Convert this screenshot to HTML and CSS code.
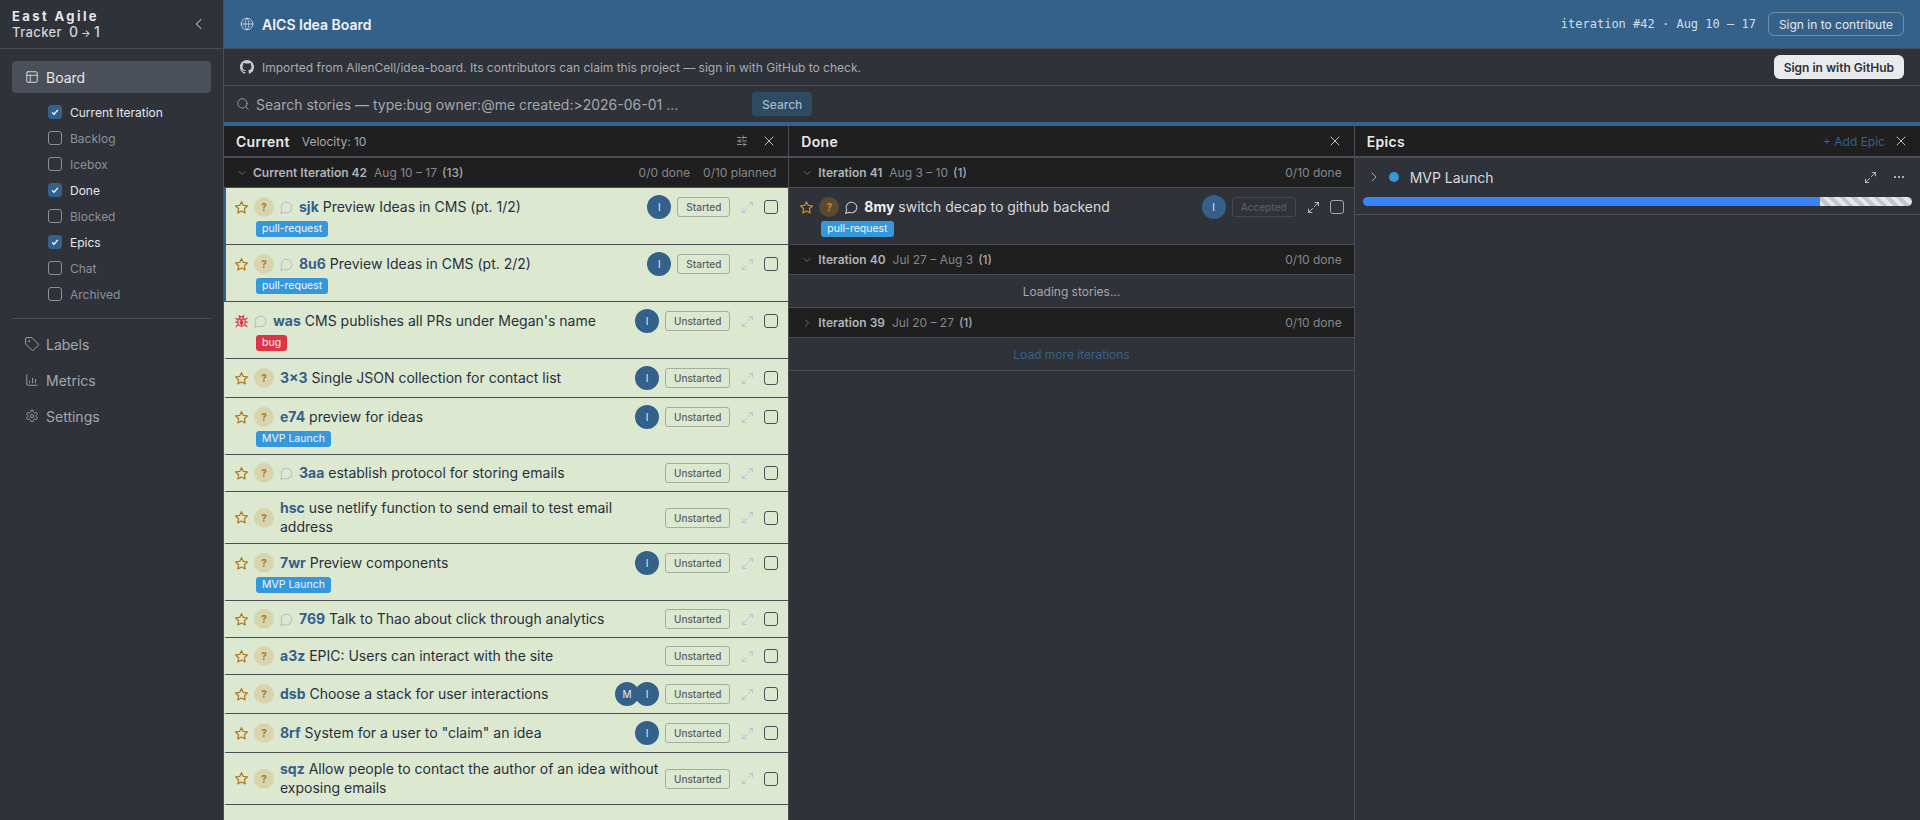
FILE: index.html
```html
<!DOCTYPE html>
<html lang="en">
<head>
    <meta charset="UTF-8">
    <title>AICS Idea Board</title>
    <link rel="stylesheet" href="styles.css">
</head>
<body>
    <svg class="sprite" xmlns="http://www.w3.org/2000/svg">
        <symbol id="i-star" viewBox="1.500 1.500 21 21"><path d="M12 2.6l2.9 6 6.6.9-4.8 4.6 1.2 6.6L12 17.6l-5.9 3.1 1.2-6.6L2.500 9.500l6.600-.9z"/></symbol>
        <symbol id="i-comment" viewBox="1 1 22 22"><path d="M7.900 20A9 9 0 1 0 4 16.100L2 22z"/></symbol>
        <symbol id="i-expand" viewBox="2 2 20 20"><path d="M15 3h6v6M21 3l-7.500 7.500M9 21H3v-6M3 21l7.500-7.500"/></symbol>
        <symbol id="i-close" viewBox="0 0 24 24"><path d="M5 5l14 14M19 5L5 19"/></symbol>
        <symbol id="i-down" viewBox="0 0 24 24"><path d="M6 9l6 6 6-6"/></symbol>
        <symbol id="i-right" viewBox="0 0 24 24"><path d="M9 6l6 6-6 6"/></symbol>
        <symbol id="i-bug" viewBox="1 1 22 22"><path d="M8 2l2 3M16 2l-2 3M8.500 7a3.500 3.500 0 0 1 7 0M7 8h10a1 1 0 0 1 1 1v5a6 6 0 0 1-12 0V9a1 1 0 0 1 1-1zM12 8v12M10 11v5M14 11v5M6 9L2.500 6.500M18 9l3.500-2.500M6 13H2M18 13h4M6.500 17L3 20.500M17.500 17l3.500 3.500"/></symbol>
    </svg>

    <aside class="sidebar">
        <div class="brand">
            <div class="brand-text">
                <div class="brand-top">East Agile</div>
                <div class="brand-sub">Tracker <span class="brand-num">0</span><span class="brand-arrow">→</span><span class="brand-num">1</span></div>
            </div>
            <svg class="ico brand-back" viewBox="0 0 24 24"><path d="M15 5l-7 7 7 7"/></svg>
        </div>
        <nav class="nav">
            <a class="nav-item active">
                <svg class="ico" viewBox="0 0 24 24"><rect x="3" y="3" width="18" height="18" rx="2"/><path d="M3 9h18M9 9v12"/></svg>
                Board
            </a>
            <ul class="panel-list">
                <li class="on"><span class="tick"><svg viewBox="0 0 24 24"><path d="M5 13l4.500 4.500L19 7"/></svg></span>Current Iteration</li>
                <li><span class="tick"></span>Backlog</li>
                <li><span class="tick"></span>Icebox</li>
                <li class="on"><span class="tick"><svg viewBox="0 0 24 24"><path d="M5 13l4.500 4.500L19 7"/></svg></span>Done</li>
                <li><span class="tick"></span>Blocked</li>
                <li class="on"><span class="tick"><svg viewBox="0 0 24 24"><path d="M5 13l4.500 4.500L19 7"/></svg></span>Epics</li>
                <li><span class="tick"></span>Chat</li>
                <li><span class="tick"></span>Archived</li>
            </ul>
            <div class="nav-sep"></div>
            <a class="nav-item">
                <svg class="ico" viewBox="1 1 22 22"><path d="M12.600 2.600A2 2 0 0 0 11.200 2H4a2 2 0 0 0-2 2v7.200a2 2 0 0 0 .6 1.400l8.700 8.700a2.400 2.400 0 0 0 3.400 0l6.600-6.600a2.400 2.400 0 0 0 0-3.400z"/><circle cx="7.500" cy="7.500" r=".6"/></svg>
                Labels
            </a>
            <a class="nav-item">
                <svg class="ico" viewBox="0 0 24 24"><path d="M3 3v16a2 2 0 0 0 2 2h16M8 17v-3M13 17V9M18 17v-6"/></svg>
                Metrics
            </a>
            <a class="nav-item">
                <svg class="ico" viewBox="0 0 24 24"><path d="M12.200 2h-.4a2 2 0 0 0-2 2v.2a2 2 0 0 1-1 1.700l-.4.300a2 2 0 0 1-2 0l-.2-.1a2 2 0 0 0-2.700.7l-.2.4a2 2 0 0 0 .7 2.700l.2.100a2 2 0 0 1 1 1.700v.5a2 2 0 0 1-1 1.700l-.2.100a2 2 0 0 0-.7 2.700l.2.4a2 2 0 0 0 2.700.7l.2-.1a2 2 0 0 1 2 0l.4.300a2 2 0 0 1 1 1.700v.2a2 2 0 0 0 2 2h.4a2 2 0 0 0 2-2v-.2a2 2 0 0 1 1-1.700l.4-.3a2 2 0 0 1 2 0l.2.100a2 2 0 0 0 2.700-.7l.2-.4a2 2 0 0 0-.7-2.700l-.2-.1a2 2 0 0 1-1-1.700v-.5a2 2 0 0 1 1-1.700l.2-.1a2 2 0 0 0 .7-2.700l-.2-.4a2 2 0 0 0-2.700-.7l-.2.1a2 2 0 0 1-2 0l-.4-.3a2 2 0 0 1-1-1.700V4a2 2 0 0 0-2-2z"/><circle cx="12" cy="12" r="3"/></svg>
                Settings
            </a>
        </nav>
    </aside>

    <main class="main">
        <header class="topbar">
            <svg class="ico globe" viewBox="0 0 24 24"><circle cx="12" cy="12" r="10"/><path d="M2 12h20M12 2a15 15 0 0 1 0 20M12 2a15 15 0 0 0 0 20"/></svg>
            <span class="project">AICS Idea Board</span>
            <span class="iter-info">iteration #42 · Aug 10 – 17</span>
            <button class="btn-outline">Sign in to contribute</button>
        </header>
        <div class="notice">
            <svg class="gh" viewBox="0 0 16 16"><path d="M8 0C3.580 0 0 3.580 0 8c0 3.540 2.290 6.530 5.470 7.590.4.070.55-.17.55-.38 0-.19-.01-.82-.01-1.490-2.010.37-2.530-.49-2.690-.94-.09-.23-.48-.94-.82-1.130-.28-.15-.68-.52-.01-.53.63-.01 1.080.58 1.230.82.720 1.210 1.870.870 2.330.660.070-.52.280-.87.510-1.070-1.780-.2-3.640-.89-3.640-3.950 0-.87.310-1.590.820-2.150-.08-.2-.36-1.020.08-2.120 0 0 .67-.21 2.200.82.640-.18 1.320-.27 2-.27s1.360.09 2 .27c1.530-1.040 2.200-.82 2.200-.82.440 1.100.160 1.920.080 2.120.510.560.820 1.270.820 2.150 0 3.070-1.870 3.750-3.650 3.950.290.250.540.730.540 1.480 0 1.070-.01 1.930-.01 2.200 0 .210.150.460.550.380A8.010 8.010 0 0 0 16 8c0-4.420-3.580-8-8-8z"/></svg>
            <span class="notice-text">Imported from AllenCell/idea-board. Its contributors can claim this project — sign in with GitHub to check.</span>
            <button class="btn-white">Sign in with GitHub</button>
        </div>
        <div class="searchbar">
            <svg class="ico" viewBox="0 0 24 24"><circle cx="11" cy="11" r="8"/><path d="M21 21l-4.300-4.300"/></svg>
            <span class="search-hint">Search stories — type:bug owner:@me created:&gt;2026-06-01 ...</span>
            <button class="btn-search">Search</button>
        </div>

        <div class="board">
            <section class="col col-current">
                <div class="col-head">
                    <span class="col-title">Current</span>
                    <span class="velocity">Velocity: 10</span>
                    <span class="spacer"></span>
                    <svg class="ico head-ico" viewBox="0 0 24 24"><path d="M21 5h-7M10 5H3M21 12h-9M8 12H3M21 19h-5M12 19H3M14 2v6M8 9v6M16 16v6"/></svg>
                    <svg class="ico head-ico close"><use href="#i-close"/></svg>
                </div>
                <div class="iter-head">
                    <svg class="ico chev"><use href="#i-down"/></svg>
                    <span class="iter-name">Current Iteration 42</span>
                    <span class="iter-date">Aug 10 – 17</span>
                    <span class="iter-count">(13)</span>
                    <span class="spacer"></span>
                    <span class="iter-stat">0/0 done</span>
                    <span class="iter-stat">0/10 planned</span>
                </div>
                <div class="stories">
                    <article class="story started">
                        <div class="story-top">
                            <svg class="ico star"><use href="#i-star"/></svg><span class="unest">?</span><svg class="ico cmt"><use href="#i-comment"/></svg>
                            <p class="story-text"><b>sjk</b> Preview Ideas in CMS (pt. 1/2)</p>
                            <span class="avatars"><span class="avatar">I</span></span>
                            <span class="status">Started</span>
                            <svg class="ico expand"><use href="#i-expand"/></svg><span class="check"></span>
                        </div>
                        <span class="tag">pull-request</span>
                    </article>
                    <article class="story started">
                        <div class="story-top">
                            <svg class="ico star"><use href="#i-star"/></svg><span class="unest">?</span><svg class="ico cmt"><use href="#i-comment"/></svg>
                            <p class="story-text"><b>8u6</b> Preview Ideas in CMS (pt. 2/2)</p>
                            <span class="avatars"><span class="avatar">I</span></span>
                            <span class="status">Started</span>
                            <svg class="ico expand"><use href="#i-expand"/></svg><span class="check"></span>
                        </div>
                        <span class="tag">pull-request</span>
                    </article>
                    <article class="story">
                        <div class="story-top">
                            <svg class="ico bug"><use href="#i-bug"/></svg><svg class="ico cmt"><use href="#i-comment"/></svg>
                            <p class="story-text"><b>was</b> CMS publishes all PRs under Megan's name</p>
                            <span class="avatars"><span class="avatar">I</span></span>
                            <span class="status">Unstarted</span>
                            <svg class="ico expand"><use href="#i-expand"/></svg><span class="check"></span>
                        </div>
                        <span class="tag tag-bug">bug</span>
                    </article>
                    <article class="story">
                        <div class="story-top">
                            <svg class="ico star"><use href="#i-star"/></svg><span class="unest">?</span>
                            <p class="story-text"><b>3×3</b> Single JSON collection for contact list</p>
                            <span class="avatars"><span class="avatar">I</span></span>
                            <span class="status">Unstarted</span>
                            <svg class="ico expand"><use href="#i-expand"/></svg><span class="check"></span>
                        </div>
                    </article>
                    <article class="story">
                        <div class="story-top">
                            <svg class="ico star"><use href="#i-star"/></svg><span class="unest">?</span>
                            <p class="story-text"><b>e74</b> preview for ideas</p>
                            <span class="avatars"><span class="avatar">I</span></span>
                            <span class="status">Unstarted</span>
                            <svg class="ico expand"><use href="#i-expand"/></svg><span class="check"></span>
                        </div>
                        <span class="tag">MVP Launch</span>
                    </article>
                    <article class="story">
                        <div class="story-top">
                            <svg class="ico star"><use href="#i-star"/></svg><span class="unest">?</span><svg class="ico cmt"><use href="#i-comment"/></svg>
                            <p class="story-text"><b>3aa</b> establish protocol for storing emails</p>
                            <span class="status">Unstarted</span>
                            <svg class="ico expand"><use href="#i-expand"/></svg><span class="check"></span>
                        </div>
                    </article>
                    <article class="story">
                        <div class="story-top">
                            <svg class="ico star"><use href="#i-star"/></svg><span class="unest">?</span>
                            <p class="story-text"><b>hsc</b> use netlify function to send email to test email address</p>
                            <span class="status">Unstarted</span>
                            <svg class="ico expand"><use href="#i-expand"/></svg><span class="check"></span>
                        </div>
                    </article>
                    <article class="story">
                        <div class="story-top">
                            <svg class="ico star"><use href="#i-star"/></svg><span class="unest">?</span>
                            <p class="story-text"><b>7wr</b> Preview components</p>
                            <span class="avatars"><span class="avatar">I</span></span>
                            <span class="status">Unstarted</span>
                            <svg class="ico expand"><use href="#i-expand"/></svg><span class="check"></span>
                        </div>
                        <span class="tag">MVP Launch</span>
                    </article>
                    <article class="story">
                        <div class="story-top">
                            <svg class="ico star"><use href="#i-star"/></svg><span class="unest">?</span><svg class="ico cmt"><use href="#i-comment"/></svg>
                            <p class="story-text"><b>769</b> Talk to Thao about click through analytics</p>
                            <span class="status">Unstarted</span>
                            <svg class="ico expand"><use href="#i-expand"/></svg><span class="check"></span>
                        </div>
                    </article>
                    <article class="story">
                        <div class="story-top">
                            <svg class="ico star"><use href="#i-star"/></svg><span class="unest">?</span>
                            <p class="story-text"><b>a3z</b> EPIC: Users can interact with the site</p>
                            <span class="status">Unstarted</span>
                            <svg class="ico expand"><use href="#i-expand"/></svg><span class="check"></span>
                        </div>
                    </article>
                    <article class="story">
                        <div class="story-top">
                            <svg class="ico star"><use href="#i-star"/></svg><span class="unest">?</span>
                            <p class="story-text"><b>dsb</b> Choose a stack for user interactions</p>
                            <span class="avatars"><span class="avatar">M</span><span class="avatar">I</span></span>
                            <span class="status">Unstarted</span>
                            <svg class="ico expand"><use href="#i-expand"/></svg><span class="check"></span>
                        </div>
                    </article>
                    <article class="story">
                        <div class="story-top">
                            <svg class="ico star"><use href="#i-star"/></svg><span class="unest">?</span>
                            <p class="story-text"><b>8rf</b> System for a user to "claim" an idea</p>
                            <span class="avatars"><span class="avatar">I</span></span>
                            <span class="status">Unstarted</span>
                            <svg class="ico expand"><use href="#i-expand"/></svg><span class="check"></span>
                        </div>
                    </article>
                    <article class="story">
                        <div class="story-top">
                            <svg class="ico star"><use href="#i-star"/></svg><span class="unest">?</span>
                            <p class="story-text"><b>sqz</b> Allow people to contact the author of an idea without exposing emails</p>
                            <span class="status">Unstarted</span>
                            <svg class="ico expand"><use href="#i-expand"/></svg><span class="check"></span>
                        </div>
                    </article>
                </div>
            </section>

            <section class="col col-done">
                <div class="col-head">
                    <span class="col-title">Done</span>
                    <span class="spacer"></span>
                    <svg class="ico head-ico close"><use href="#i-close"/></svg>
                </div>
                <div class="iter-head">
                    <svg class="ico chev"><use href="#i-down"/></svg>
                    <span class="iter-name">Iteration 41</span>
                    <span class="iter-date">Aug 3 – 10</span>
                    <span class="iter-count">(1)</span>
                    <span class="spacer"></span>
                    <span class="iter-stat">0/10 done</span>
                </div>
                <article class="story dark">
                    <div class="story-top">
                        <svg class="ico star"><use href="#i-star"/></svg><span class="unest">?</span><svg class="ico cmt"><use href="#i-comment"/></svg>
                        <p class="story-text"><b>8my</b> switch decap to github backend</p>
                        <span class="avatars"><span class="avatar">I</span></span>
                        <span class="status">Accepted</span>
                        <svg class="ico expand"><use href="#i-expand"/></svg><span class="check"></span>
                    </div>
                    <span class="tag">pull-request</span>
                </article>
                <div class="iter-head">
                    <svg class="ico chev"><use href="#i-down"/></svg>
                    <span class="iter-name">Iteration 40</span>
                    <span class="iter-date">Jul 27 – Aug 3</span>
                    <span class="iter-count">(1)</span>
                    <span class="spacer"></span>
                    <span class="iter-stat">0/10 done</span>
                </div>
                <div class="col-line loading">Loading stories...</div>
                <div class="iter-head">
                    <svg class="ico chev"><use href="#i-right"/></svg>
                    <span class="iter-name">Iteration 39</span>
                    <span class="iter-date">Jul 20 – 27</span>
                    <span class="iter-count">(1)</span>
                    <span class="spacer"></span>
                    <span class="iter-stat">0/10 done</span>
                </div>
                <div class="col-line load-more">Load more iterations</div>
            </section>

            <section class="col col-epics">
                <div class="col-head">
                    <span class="col-title">Epics</span>
                    <span class="spacer"></span>
                    <span class="add-epic">+ Add Epic</span>
                    <svg class="ico head-ico close"><use href="#i-close"/></svg>
                </div>
                <div class="epic">
                    <div class="epic-top">
                        <svg class="ico epic-chev"><use href="#i-right"/></svg>
                        <span class="epic-dot"></span>
                        <span class="epic-name">MVP Launch</span>
                        <span class="spacer"></span>
                        <svg class="ico epic-ico"><use href="#i-expand"/></svg>
                        <svg class="epic-more" viewBox="0 0 12 4"><circle cx="2" cy="2" r="1"/><circle cx="6" cy="2" r="1"/><circle cx="10" cy="2" r="1"/></svg>
                    </div>
                    <div class="progress">
                        <div class="progress-fill"></div>
                        <div class="progress-rest"></div>
                    </div>
                </div>
            </section>
        </div>
    </main>
</body>
</html>
```

FILE: styles.css
```css
* {
    box-sizing: border-box;
}
html, body {
    height: 100%;
}
body {
    margin: 0;
    display: flex;
    overflow: hidden;
    font-family: Inter, "Noto Sans", sans-serif;
    font-size: 12px;
    background: #2f3238;
    color: #e5e7eb;
}
.sprite {
    display: none;
}
.spacer {
    flex: 1;
}
.ico {
    display: block;
    flex: none;
    width: 14px;
    height: 14px;
    fill: none;
    stroke: currentColor;
    stroke-width: 2;
    stroke-linecap: round;
    stroke-linejoin: round;
}
button {
    font-family: inherit;
    cursor: pointer;
}

/* sidebar */
.sidebar {
    flex: none;
    width: 224px;
    background: #2f3238;
    border-right: 1px solid #4a4d55;
}
.brand {
    display: flex;
    align-items: center;
    justify-content: space-between;
    height: 49px;
    padding: 0 12px;
    border-bottom: 1px solid #4a4d55;
}
.brand-top {
    font-size: 13px;
    line-height: 16px;
    font-weight: 700;
    letter-spacing: 2.4px;
    color: #e5e7eb;
}
.brand-sub {
    font-size: 13px;
    line-height: 16px;
    font-weight: 500;
    letter-spacing: .4px;
    color: #d1d5db;
}
.brand-num {
    margin-left: 3px;
    font-size: 14px;
    letter-spacing: 0;
}
.brand-arrow {
    margin-left: 3px;
    font-size: 10px;
}
.brand-back {
    width: 16px;
    height: 16px;
    margin-right: 4px;
    color: #9ca3af;
    stroke-width: 1.6;
}
.nav {
    padding: 12px;
}
.nav-item {
    display: flex;
    align-items: center;
    gap: 7px;
    height: 36px;
    padding: 0 13px;
    border-radius: 4px;
    font-size: 14px;
    color: #a3a7ae;
}
.nav-item .ico {
    stroke-width: 1.5;
}
.nav-item.active {
    height: 32px;
    background: #4b4f58;
    color: #e5e7eb;
}
.panel-list {
    list-style: none;
    margin: 0;
    padding: 0 0 0 36px;
}
.panel-list li {
    display: flex;
    align-items: center;
    gap: 8px;
    height: 26px;
    color: #8d9198;
}
.panel-list li.on {
    color: #e5e7eb;
}
.panel-list li:first-child {
    margin-top: 6px;
}
.tick {
    display: flex;
    align-items: center;
    justify-content: center;
    width: 14px;
    height: 14px;
    border: 1px solid #8d9198;
    border-radius: 3px;
}
.on .tick {
    background: #34618a;
    border-color: #34618a;
}
.tick svg {
    width: 10px;
    height: 10px;
    fill: none;
    stroke: #fff;
    stroke-width: 3;
}
.nav-sep {
    height: 1px;
    margin: 11px 0 7px;
    background: #4a4d55;
}

/* top bars */
.main {
    flex: 1;
    min-width: 0;
    display: flex;
    flex-direction: column;
}
.topbar {
    flex: none;
    display: flex;
    align-items: center;
    height: 49px;
    padding: 0 16px;
    background: #34618a;
    border-bottom: 1px solid #4a4d55;
}
.globe {
    color: #c3d0dc;
    stroke-width: 1.5;
}
.project {
    margin-left: 8px;
    flex: 1;
    font-size: 14px;
    font-weight: 600;
    color: #f0f2f5;
}
.iter-info {
    font-family: "DejaVu Sans Mono", "Liberation Mono", monospace;
    font-size: 12px;
    color: #d5dee6;
}
.btn-outline {
    height: 24px;
    margin-left: 12px;
    padding: 0 10px;
    background: none;
    border: 1px solid rgba(255, 255, 255, .3);
    border-radius: 6px;
    font-size: 12px;
    color: #e5e9ed;
}
.notice {
    flex: none;
    display: flex;
    align-items: center;
    height: 37px;
    padding: 0 16px;
    border-bottom: 1px solid #4a4d55;
    color: #a8abb1;
}
.gh {
    width: 14px;
    height: 14px;
    fill: #c9ccd1;
}
.notice-text {
    flex: 1;
    margin-left: 8px;
}
.btn-white {
    height: 24px;
    padding: 0 10px;
    background: #e9eaee;
    border: 0;
    border-radius: 6px;
    font-size: 12px;
    font-weight: 600;
    color: #2f3238;
}
.searchbar {
    flex: none;
    display: flex;
    align-items: center;
    height: 36px;
    padding: 0 12px;
    color: #a3a7ae;
}
.searchbar .ico {
    stroke-width: 1.5;
}
.search-hint {
    width: 496px;
    margin-left: 6px;
    font-size: 14px;
}
.btn-search {
    height: 24px;
    padding: 0 10px;
    background: #2d4a63;
    border: 0;
    border-radius: 4px;
    font-size: 12px;
    font-weight: 500;
    color: #a9b7c4;
}

/* board */
.board {
    flex: 1;
    min-height: 0;
    display: grid;
    grid-template-columns: repeat(3, 1fr);
    border-top: 4px solid #34618a;
}
.col {
    min-width: 0;
    display: flex;
    flex-direction: column;
    border-right: 1px solid #4a4d55;
}
.col:last-child {
    border-right: 0;
}
.col-head {
    flex: none;
    display: flex;
    align-items: center;
    gap: 12px;
    height: 32px;
    padding: 0 12px;
    background: #1f1f1f;
    border-bottom: 2px solid #4a4d55;
}
.col-title {
    font-size: 14px;
    font-weight: 600;
    letter-spacing: .3px;
    color: #e9eaec;
}
.velocity {
    color: #a3a7ae;
}
.head-ico {
    width: 12px;
    height: 12px;
    color: #b5b8bd;
    stroke-width: 1.5;
}
.head-ico.close {
    width: 14px;
    height: 14px;
    margin-left: 2px;
    color: #d1d5db;
}
.add-epic {
    color: #34618a;
}
.col-epics .close {
    margin-left: -3px;
}
.iter-head {
    flex: none;
    display: flex;
    align-items: center;
    height: 30px;
    padding: 0 12px;
    background: #1f1f1f;
    border-bottom: 1px solid #4a4d55;
    color: #85878c;
}
.chev {
    width: 12px;
    height: 12px;
    margin-right: 5px;
    stroke-width: 1.5;
}
.iter-name {
    font-weight: 600;
    color: #b0b3b8;
}
.iter-date {
    margin-left: 7px;
}
.iter-count {
    margin-left: 5px;
    font-weight: 500;
    color: #a3a7ae;
}
.iter-stat {
    margin-left: 13px;
}
.stories {
    flex: 1;
    background: #dde8d0;
}

/* story row */
.story {
    padding: 7px 10px 7px 9px;
    border-left: 2px solid transparent;
    border-bottom: 1px solid #4a4f57;
    color: #27303d;
}
.story.started {
    border-left-color: #34618a;
}
.story-top {
    display: flex;
    align-items: center;
    min-height: 22px;
    gap: 6px;
}
.star {
    width: 13px;
    height: 13px;
    color: #b07a20;
    stroke-width: 2;
}
.bug {
    width: 13px;
    height: 13px;
    color: #dc3545;
    stroke-width: 2;
}
.unest {
    flex: none;
    width: 20px;
    height: 20px;
    border-radius: 50%;
    background: #d8d5ae;
    text-align: center;
    line-height: 20px;
    font-size: 10px;
    font-weight: 700;
    color: #a97a20;
}
.cmt {
    width: 13px;
    height: 13px;
    color: #b9bfc6;
    stroke-width: 1.700;
}
.story-text {
    flex: 1;
    margin: 0;
    font-size: 14px;
    line-height: 18.5px;
}
.story-text b {
    font-weight: 700;
    color: #34618a;
}
.avatars {
    flex: none;
    display: flex;
}
.avatar {
    width: 24px;
    height: 24px;
    border-radius: 50%;
    background: #34618a;
    text-align: center;
    line-height: 24px;
    font-size: 10px;
    font-weight: 400;
    color: #e5ebf0;
}
.avatar + .avatar {
    margin-left: -4px;
}
.status {
    flex: none;
    height: 20px;
    padding: 0 8px;
    border: 1px solid #a5ad9e;
    border-radius: 3px;
    line-height: 18px;
    font-size: 10px;
    font-weight: 500;
    color: #56606b;
}
.expand {
    width: 11px;
    height: 11px;
    margin: 0 5px 0 6px;
    color: #b6bcca;
    stroke-width: 1.5;
}
.check {
    flex: none;
    width: 14px;
    height: 14px;
    border: 1px solid #4a4f57;
    border-radius: 3px;
}
.tag {
    display: block;
    width: fit-content;
    height: 16px;
    margin: 2px 0 0 21px;
    padding: 0 6px;
    border-radius: 3px;
    background: #3498db;
    line-height: 16px;
    font-size: 10.500px;
    font-weight: 400;
    color: #f2f7fb;
}
.tag-bug {
    background: #dc3545;
}
.story.dark {
    flex: none;
    border-bottom: 1px solid #4a4d55;
    color: #d8dadd;
}
.dark .story-text b {
    color: #f0f1f3;
}
.dark .unest {
    background: #5a4a32;
    color: #c98a20;
}
.dark .star {
    color: #c98a20;
}
.dark .cmt {
    color: #c9ccd1;
}
.dark .status {
    border-color: #44474e;
    color: #585b62;
}
.dark .expand {
    color: #d8dadd;
}
.dark .check {
    border-color: #a3a7ae;
}
.col-line {
    flex: none;
    height: 33px;
    text-align: center;
    line-height: 33px;
    border-bottom: 1px solid #4a4d55;
}
.loading {
    color: #a3a7ae;
}
.load-more {
    color: #34618a;
}

/* epics */
.epic {
    padding: 4px 8px 8px;
    border-bottom: 1px solid #4a4d55;
}
.epic-top {
    display: flex;
    align-items: center;
    height: 30px;
    padding: 0 7px 0 3px;
}
.epic-chev {
    width: 16px;
    height: 16px;
    color: #a3a7ae;
    stroke-width: 1.5;
}
.epic-dot {
    width: 10px;
    height: 10px;
    margin-left: 7px;
    border-radius: 50%;
    background: #3498db;
}
.epic-name {
    margin-left: 11px;
    font-size: 14px;
    color: #d8dadd;
}
.epic-ico {
    width: 11px;
    height: 11px;
    color: #d1d5db;
    stroke-width: 1.5;
}
.epic-more {
    width: 12px;
    height: 4px;
    margin-left: 17px;
    fill: #d1d5db;
}
.progress {
    display: flex;
    height: 9px;
    margin-top: 5px;
    border-radius: 5px;
    overflow: hidden;
}
.progress-fill {
    width: 83.2%;
    background: #3b82f6;
}
.progress-rest {
    flex: 1;
    background: repeating-linear-gradient(45deg, #e5e7eb 0 4px, #c2c6cd 4px 8px);
}
```
